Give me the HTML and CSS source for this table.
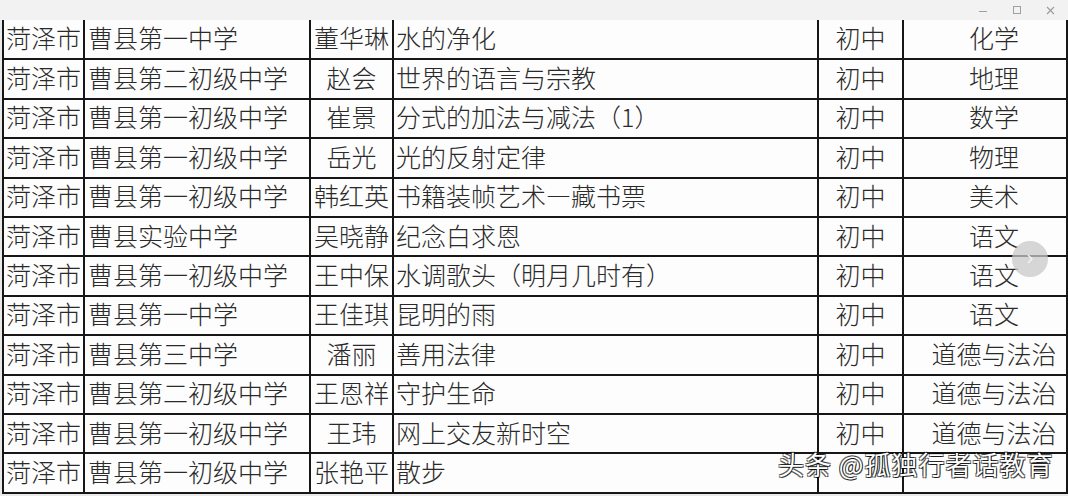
FILE: index.html
```html
<!DOCTYPE html>
<html lang="zh">
<head>
<meta charset="utf-8">
<title>名单</title>
<link rel="stylesheet" href="styles.css">
</head>
<body>
<div class="titlebar">
  <span class="ctrl min"></span>
  <span class="ctrl max"></span>
  <span class="ctrl close">
    <svg width="9" height="9" viewBox="0 0 9 9"><path d="M1 1L8 8M8 1L1 8" stroke="#9a9a9a" stroke-width="1.1" fill="none"/></svg>
  </span>
</div>
<table class="grid">
  <colgroup>
    <col class="c1"><col class="c2"><col class="c3"><col class="c4"><col class="c5"><col class="c6">
  </colgroup>
  <tbody>
    <tr><td>菏泽市</td><td class="l">曹县第一中学</td><td class="c">董华琳</td><td class="t">水的净化</td><td class="c">初中</td><td class="c s">化学</td></tr>
    <tr><td>菏泽市</td><td class="l">曹县第二初级中学</td><td class="c">赵会</td><td class="t">世界的语言与宗教</td><td class="c">初中</td><td class="c s">地理</td></tr>
    <tr><td>菏泽市</td><td class="l">曹县第一初级中学</td><td class="c">崔景</td><td class="t">分式的加法与减法（1）</td><td class="c">初中</td><td class="c s">数学</td></tr>
    <tr><td>菏泽市</td><td class="l">曹县第一初级中学</td><td class="c">岳光</td><td class="t">光的反射定律</td><td class="c">初中</td><td class="c s">物理</td></tr>
    <tr><td>菏泽市</td><td class="l">曹县第一初级中学</td><td class="c">韩红英</td><td class="t">书籍装帧艺术—藏书票</td><td class="c">初中</td><td class="c s">美术</td></tr>
    <tr><td>菏泽市</td><td class="l">曹县实验中学</td><td class="c">吴晓静</td><td class="t">纪念白求恩</td><td class="c">初中</td><td class="c s">语文</td></tr>
    <tr><td>菏泽市</td><td class="l">曹县第一初级中学</td><td class="c">王中保</td><td class="t">水调歌头（明月几时有）</td><td class="c">初中</td><td class="c s">语文</td></tr>
    <tr><td>菏泽市</td><td class="l">曹县第一中学</td><td class="c">王佳琪</td><td class="t">昆明的雨</td><td class="c">初中</td><td class="c s">语文</td></tr>
    <tr><td>菏泽市</td><td class="l">曹县第三中学</td><td class="c">潘丽</td><td class="t">善用法律</td><td class="c">初中</td><td class="c s">道德与法治</td></tr>
    <tr><td>菏泽市</td><td class="l">曹县第二初级中学</td><td class="c">王恩祥</td><td class="t">守护生命</td><td class="c">初中</td><td class="c s">道德与法治</td></tr>
    <tr><td>菏泽市</td><td class="l">曹县第一初级中学</td><td class="c">王玮</td><td class="t">网上交友新时空</td><td class="c">初中</td><td class="c s">道德与法治</td></tr>
    <tr><td>菏泽市</td><td class="l">曹县第一初级中学</td><td class="c">张艳平</td><td class="t">散步</td><td class="c"></td><td class="c s"></td></tr>
  </tbody>
</table>
<div class="next">
  <svg width="10" height="12" viewBox="0 0 10 12"><path d="M3 2L7 6L3 10" stroke="#f4f4f4" stroke-width="1.4" fill="none"/></svg>
</div>
<div class="watermark">头条 @孤独行者话教育</div>
</body>
</html>
```
FILE: styles.css
```css
html, body {
  margin: 0;
  padding: 0;
}
body {
  width: 1068px;
  height: 496px;
  overflow: hidden;
  background: #e9e9e9;
  position: relative;
  font-family: "Noto Sans CJK SC", "Noto Sans", sans-serif;
}
.titlebar {
  height: 20px;
  background: #f2f2f2;
  display: flex;
  justify-content: flex-end;
  align-items: center;
  gap: 25px;
  padding-right: 13px;
  position: relative;
  z-index: 2;
}
.ctrl {
  width: 9px;
  height: 9px;
  display: flex;
  align-items: center;
  justify-content: center;
}
.ctrl.min::before {
  content: "";
  width: 8px;
  height: 1px;
  background: #a0a0a0;
  margin-top: 3px;
}
.ctrl.max::before {
  content: "";
  width: 6px;
  height: 6px;
  border: 1px solid #a0a0a0;
}
.grid {
  border-collapse: collapse;
  table-layout: fixed;
  width: 1064px;
  margin-left: 2px;
  background: #fdfdfd;
  color: #2a2a2a;
  font-size: 25px;
  font-weight: 300;
  line-height: 1;
}
.c1 { width: 81px; }
.c2 { width: 226px; }
.c3 { width: 83px; }
.c4 { width: 425px; }
.c5 { width: 85px; }
.c6 { width: 164px; }
.grid tr {
  height: 39.4px;
}
.grid td {
  border: 2px solid #161616;
  padding: 0 0 3px 2px;
  white-space: nowrap;
  overflow: hidden;
  vertical-align: middle;
}
.grid tr:first-child td {
  border-top: none;
}
.grid td.l {
  padding-left: 3px;
}
.grid td.t {
  padding-left: 2px;
}
.grid td.c {
  text-align: center;
  padding-left: 0;
}
.grid td.s {
  padding-left: 18px;
}
.next {
  position: absolute;
  left: 1012px;
  top: 241px;
  width: 36px;
  height: 36px;
  border-radius: 50%;
  background: rgba(200, 200, 200, 0.75);
  display: flex;
  align-items: center;
  justify-content: center;
}
.watermark {
  position: absolute;
  left: 778px;
  top: 448px;
  font-size: 26px;
  line-height: 1.2;
  color: #ffffff;
  letter-spacing: 1px;
  text-shadow: 1px 1px 0 rgba(0,0,0,0.75), -1px -1px 0 rgba(0,0,0,0.6), 1px -1px 0 rgba(0,0,0,0.6), -1px 1px 0 rgba(0,0,0,0.6);
  white-space: nowrap;
}
```
